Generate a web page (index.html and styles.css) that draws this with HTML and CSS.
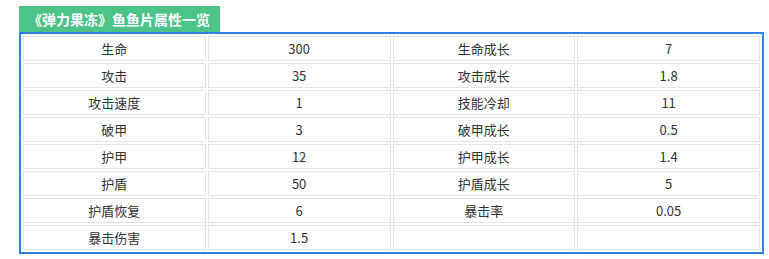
FILE: index.html
```html
<!DOCTYPE html>
<html lang="zh">
<head>
<meta charset="utf-8">
<link rel="stylesheet" href="styles.css">
</head>
<body>
<div class="wrap">
  <div class="title">《弹力果冻》鱼鱼片属性一览</div>
  <div class="box">
    <table class="attr">
      <tr><td>生命</td><td>300</td><td>生命成长</td><td>7</td></tr>
      <tr><td>攻击</td><td>35</td><td>攻击成长</td><td>1.8</td></tr>
      <tr><td>攻击速度</td><td>1</td><td>技能冷却</td><td>11</td></tr>
      <tr><td>破甲</td><td>3</td><td>破甲成长</td><td>0.5</td></tr>
      <tr><td>护甲</td><td>12</td><td>护甲成长</td><td>1.4</td></tr>
      <tr><td>护盾</td><td>50</td><td>护盾成长</td><td>5</td></tr>
      <tr><td>护盾恢复</td><td>6</td><td>暴击率</td><td>0.05</td></tr>
      <tr><td>暴击伤害</td><td>1.5</td><td></td><td></td></tr>
    </table>
  </div>
</div>
</body>
</html>
```
FILE: styles.css
```css
html, body { margin: 0; padding: 0; background: #fff; }
body { font-family: "Noto Sans CJK SC", "Microsoft YaHei", sans-serif; color: #333; }
.wrap { padding: 6px 6px 0 19px; }
.title {
  display: inline-block;
  background: #4dc387;
  color: #fff;
  font-weight: bold;
  font-size: 14px;
  height: 26px;
  line-height: 26px;
  padding: 0 10px 0 9px;
}
.box {
  width: 741px;
  border: 2px solid #2f7fe3;
}
.attr {
  width: 100%;
  border-collapse: separate;
  border-spacing: 2px;
  table-layout: fixed;
}
.attr td {
  border: 1px solid #e3e3e3;
  height: 23px;
  padding: 0;
  text-align: center;
  font-size: 13px;
  line-height: 23px;
  box-sizing: content-box;
}
```
